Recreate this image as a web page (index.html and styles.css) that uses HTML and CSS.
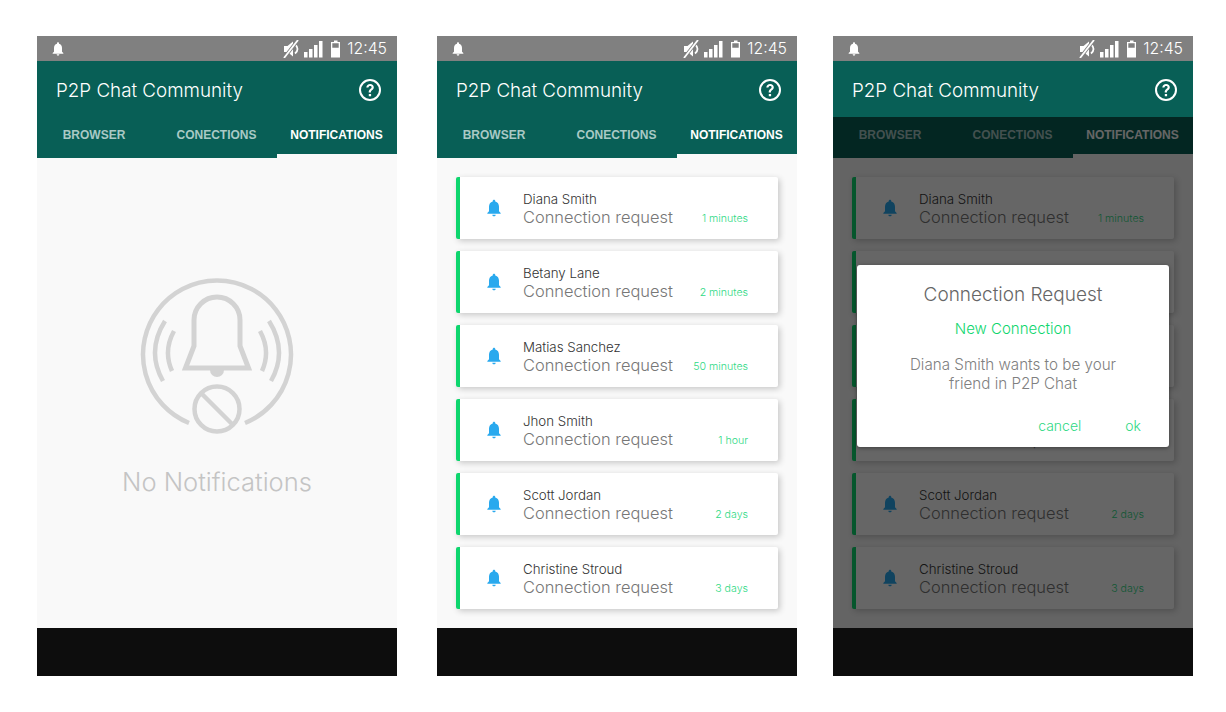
FILE: index.html
```html
<!DOCTYPE html>
<html lang="en">
<head>
    <meta charset="UTF-8">
    <title>P2P Chat Community</title>
    <link rel="stylesheet" href="styles.css">
</head>
<body>
    <svg class="defs" width="0" height="0">
        <symbol id="bell" viewBox="0 0 24 24">
            <path d="M12 2c-.9 0-1.500.7-1.500 1.500v.7C7.600 4.900 6 7.400 6 10.500V16l-2 2v1h16v-1l-2-2v-5.500c0-3.100-1.600-5.600-4.500-6.300v-.7C13.500 2.700 12.900 2 12 2zm-2 18c0 1.100.9 2 2 2s2-.9 2-2z"/>
        </symbol>
        <symbol id="help" viewBox="0 0 24 24">
            <circle cx="12" cy="12" r="10" fill="none" stroke="#fff" stroke-width="2"/>
            <path d="M8.300 9.500C8.500 7.300 10 6 12.100 6c2.200 0 3.700 1.400 3.700 3.200 0 1.500-.8 2.200-1.800 3-.9.7-1.100 1.100-1.100 2.300h-2.200c0-1.800.4-2.500 1.600-3.500.8-.7 1.300-1.100 1.300-1.800 0-.8-.6-1.300-1.500-1.300-1 0-1.600.6-1.700 1.600zM10.800 16h2.300v2.300h-2.300z" fill="#fff"/>
        </symbol>
        <symbol id="status-icons" viewBox="0 0 60 18">
            <path d="M1 6h3.500L10 1.500v15L4.500 12H1z" fill="#fff"/>
            <path d="M12 4.500c1.500 1.200 2.500 2.800 2.500 4.500s-1 3.300-2.500 4.500" fill="none" stroke="#fff" stroke-width="1.800"/>
            <path d="M1 18L15 0" stroke="#808080" stroke-width="3.500"/>
            <path d="M1 18L15 0" stroke="#fff" stroke-width="1.800"/>
            <path d="M21 12h3.500v5.500H21zM26 9h3.500v8.500H26zM31 5h3.500v12.500H31zM36 1h3.500v16.500H36z" fill="#fff"/>
            <path d="M51 .5h3.500V2H57v15.500H48V2h3zM49.300 3.300v4.500h6.400V3.300z" fill="#fff" fill-rule="evenodd"/>
        </symbol>
    </svg>

    <div class="phones">
        <!-- empty state -->
        <section class="phone">
            <div class="status-bar">
                <svg class="status-bell"><use href="#bell"/></svg>
                <svg class="status-icons"><use href="#status-icons"/></svg>
                <span class="clock">12:45</span>
            </div>
            <header class="app-bar">
                <h1>P2P Chat Community</h1>
                <svg class="help"><use href="#help"/></svg>
            </header>
            <nav class="tabs">
                <span class="tab first">BROWSER</span>
                <span class="tab">CONECTIONS</span>
                <span class="tab active">NOTIFICATIONS</span>
            </nav>
            <main class="content empty">
                <svg class="empty-icon" viewBox="0 0 200 200" width="200" height="200">
                    <path d="M68 155A74 74 0 1 1 124 155"/>
                    <path class="bell-outline" d="M64.500 100L73 78V52A23 23 0 0 1 119 52V78L127.500 100Z"/>
                    <path class="wave" d="M53 63Q42 83 51 103M44 53Q25 83 42 113M139 63Q150 83 141 103M148 53Q167 83 150 113"/>
                    <path class="clapper" d="M89 102h14a7 7 0 0 1-14 0z"/>
                    <circle cx="96" cy="141" r="22.500"/>
                    <path d="M80 125L112 157"/>
                </svg>
                <p class="empty-text">No Notifications</p>
            </main>
            <div class="nav-bar"></div>
        </section>

        <!-- list -->
        <section class="phone">
            <div class="status-bar">
                <svg class="status-bell"><use href="#bell"/></svg>
                <svg class="status-icons"><use href="#status-icons"/></svg>
                <span class="clock">12:45</span>
            </div>
            <header class="app-bar">
                <h1>P2P Chat Community</h1>
                <svg class="help"><use href="#help"/></svg>
            </header>
            <nav class="tabs">
                <span class="tab first">BROWSER</span>
                <span class="tab">CONECTIONS</span>
                <span class="tab active">NOTIFICATIONS</span>
            </nav>
            <main class="content list">
                <div class="card">
                    <svg class="card-bell"><use href="#bell"/></svg>
                    <div class="card-text"><div class="name">Diana Smith</div><div class="request">Connection request</div></div>
                    <span class="time">1 minutes</span>
                </div>
                <div class="card">
                    <svg class="card-bell"><use href="#bell"/></svg>
                    <div class="card-text"><div class="name">Betany Lane</div><div class="request">Connection request</div></div>
                    <span class="time">2 minutes</span>
                </div>
                <div class="card">
                    <svg class="card-bell"><use href="#bell"/></svg>
                    <div class="card-text"><div class="name">Matias Sanchez</div><div class="request">Connection request</div></div>
                    <span class="time">50 minutes</span>
                </div>
                <div class="card">
                    <svg class="card-bell"><use href="#bell"/></svg>
                    <div class="card-text"><div class="name">Jhon Smith</div><div class="request">Connection request</div></div>
                    <span class="time">1 hour</span>
                </div>
                <div class="card">
                    <svg class="card-bell"><use href="#bell"/></svg>
                    <div class="card-text"><div class="name">Scott Jordan</div><div class="request">Connection request</div></div>
                    <span class="time">2 days</span>
                </div>
                <div class="card">
                    <svg class="card-bell"><use href="#bell"/></svg>
                    <div class="card-text"><div class="name">Christine Stroud</div><div class="request">Connection request</div></div>
                    <span class="time">3 days</span>
                </div>
            </main>
            <div class="nav-bar"></div>
        </section>

        <!-- list with dialog open -->
        <section class="phone">
            <div class="status-bar">
                <svg class="status-bell"><use href="#bell"/></svg>
                <svg class="status-icons"><use href="#status-icons"/></svg>
                <span class="clock">12:45</span>
            </div>
            <header class="app-bar">
                <h1>P2P Chat Community</h1>
                <svg class="help"><use href="#help"/></svg>
            </header>
            <nav class="tabs">
                <span class="tab first">BROWSER</span>
                <span class="tab">CONECTIONS</span>
                <span class="tab active">NOTIFICATIONS</span>
            </nav>
            <main class="content list">
                <div class="card">
                    <svg class="card-bell"><use href="#bell"/></svg>
                    <div class="card-text"><div class="name">Diana Smith</div><div class="request">Connection request</div></div>
                    <span class="time">1 minutes</span>
                </div>
                <div class="card">
                    <svg class="card-bell"><use href="#bell"/></svg>
                    <div class="card-text"><div class="name">Betany Lane</div><div class="request">Connection request</div></div>
                    <span class="time">2 minutes</span>
                </div>
                <div class="card">
                    <svg class="card-bell"><use href="#bell"/></svg>
                    <div class="card-text"><div class="name">Matias Sanchez</div><div class="request">Connection request</div></div>
                    <span class="time">50 minutes</span>
                </div>
                <div class="card">
                    <svg class="card-bell"><use href="#bell"/></svg>
                    <div class="card-text"><div class="name">Jhon Smith</div><div class="request">Connection request</div></div>
                    <span class="time">1 hour</span>
                </div>
                <div class="card">
                    <svg class="card-bell"><use href="#bell"/></svg>
                    <div class="card-text"><div class="name">Scott Jordan</div><div class="request">Connection request</div></div>
                    <span class="time">2 days</span>
                </div>
                <div class="card">
                    <svg class="card-bell"><use href="#bell"/></svg>
                    <div class="card-text"><div class="name">Christine Stroud</div><div class="request">Connection request</div></div>
                    <span class="time">3 days</span>
                </div>
            </main>
            <div class="nav-bar"></div>
            <div class="dim"></div>
            <div class="dialog">
                <h2>Connection Request</h2>
                <p class="dialog-sub">New Connection</p>
                <p class="dialog-body">Diana Smith wants to be your<br>friend in P2P Chat</p>
                <div class="dialog-actions">
                    <span>cancel</span>
                    <span>ok</span>
                </div>
            </div>
        </section>
    </div>
</body>
</html>
```

FILE: styles.css
```css
body {
    margin: 0;
    padding: 36px 37px;
    background-color: #fff;
    font-family: Inter, "Liberation Sans", sans-serif;
    font-weight: 300;
}

.defs {
    position: absolute;
}

.phones {
    display: flex;
}

.phone {
    position: relative;
    width: 360px;
    height: 640px;
    display: flex;
    flex-direction: column;
    margin-right: 40px;
}

.phone:last-child {
    margin-right: 0;
    margin-left: -4px;
}

.status-bar {
    height: 25px;
    background-color: #808080;
    color: #fff;
    display: flex;
    align-items: center;
    padding: 0 10px 0 13px;
}

.status-bell {
    width: 16px;
    height: 16px;
    fill: #fff;
}

.status-icons {
    width: 60px;
    height: 18px;
    margin-left: auto;
}

.clock {
    font-size: 15.800px;
    margin-left: 4px;
}

.app-bar {
    height: 56px;
    background-color: #085f56;
    display: flex;
    align-items: center;
    justify-content: space-between;
    padding: 2px 15px 0 19px;
    box-sizing: border-box;
    color: #fff;
}

.app-bar h1 {
    font-size: 18.800px;
    font-weight: 300;
    margin: 0;
}

.help {
    width: 24px;
    height: 24px;
}

.tabs {
    height: 41px;
    background-color: #085f56;
    display: flex;
}

.tab {
    flex: 0 0 120px;
    box-sizing: border-box;
    text-align: center;
    font-family: "Liberation Sans", sans-serif;
    font-size: 12px;
    font-weight: 700;
    line-height: 36px;
    color: #a9c9c5;
    padding-right: 1px;
}

.tab.first {
    padding-right: 6px;
}

.tab.active {
    color: #fff;
    border-bottom: 4px solid #f9f9f9;
}

.content {
    flex: 1;
    background-color: #f9f9f9;
}

.empty {
    display: flex;
    flex-direction: column;
    align-items: center;
}

.empty-icon {
    margin-top: 110px;
    margin-left: 7px;
    fill: none;
    stroke: #d3d3d3;
    stroke-width: 4.500;
}

.empty-icon .bell-outline {
    stroke-width: 5;
}

.empty-icon .wave {
    stroke-width: 4.500;
}

.empty-icon .clapper {
    fill: #d3d3d3;
    stroke: none;
}

.empty-text {
    margin: -2px 0 0;
    font-size: 25.500px;
    color: #c4c4c4;
}

.list {
    padding: 19px 19px 0;
    display: flex;
    flex-direction: column;
    gap: 12px;
}

.card {
    height: 62px;
    width: 322px;
    box-sizing: border-box;
    background-color: #fff;
    border-left: 4px solid #0ed66e;
    border-radius: 2px;
    box-shadow: 2px 2px 6px rgba(0, 0, 0, .2);
    display: flex;
    padding-right: 30px;
}

.card-bell {
    width: 20px;
    height: 20px;
    fill: #29a9ee;
    margin: 21px 0 0 24px;
    flex: none;
}

.card-text {
    margin: 13px 0 0 19px;
}

.name {
    font-size: 13.300px;
    line-height: 18px;
    color: #333;
}

.request {
    font-size: 16.400px;
    line-height: 19px;
    color: #777;
}

.time {
    margin-left: auto;
    margin-top: 35px;
    font-size: 10.600px;
    line-height: 14px;
    color: #2ed984;
}

.nav-bar {
    height: 48px;
    background-color: #0d0d0d;
}

.dim {
    position: absolute;
    left: 0;
    right: 0;
    top: 81px;
    bottom: 48px;
    background-color: rgba(0, 0, 0, .6);
}

.dialog {
    position: absolute;
    left: 24px;
    top: 229px;
    width: 312px;
    height: 182px;
    box-sizing: border-box;
    background-color: #fff;
    border-radius: 3px;
    box-shadow: 0 1px 4px rgba(0, 0, 0, .4);
    text-align: center;
}

.dialog h2 {
    margin: 17px 0 0;
    font-size: 19px;
    line-height: 26px;
    font-weight: 300;
    color: #666;
}

.dialog-sub {
    margin: 11px 0 0;
    font-size: 15px;
    line-height: 20px;
    color: #0ed66e;
}

.dialog-body {
    margin: 16px 0 0;
    font-size: 15.200px;
    line-height: 19px;
    color: #808080;
}

.dialog-actions {
    display: flex;
    justify-content: flex-end;
    gap: 44px;
    margin-top: 24px;
    padding-right: 28px;
    font-size: 14px;
    line-height: 18px;
    color: #2ed984;
}
```
